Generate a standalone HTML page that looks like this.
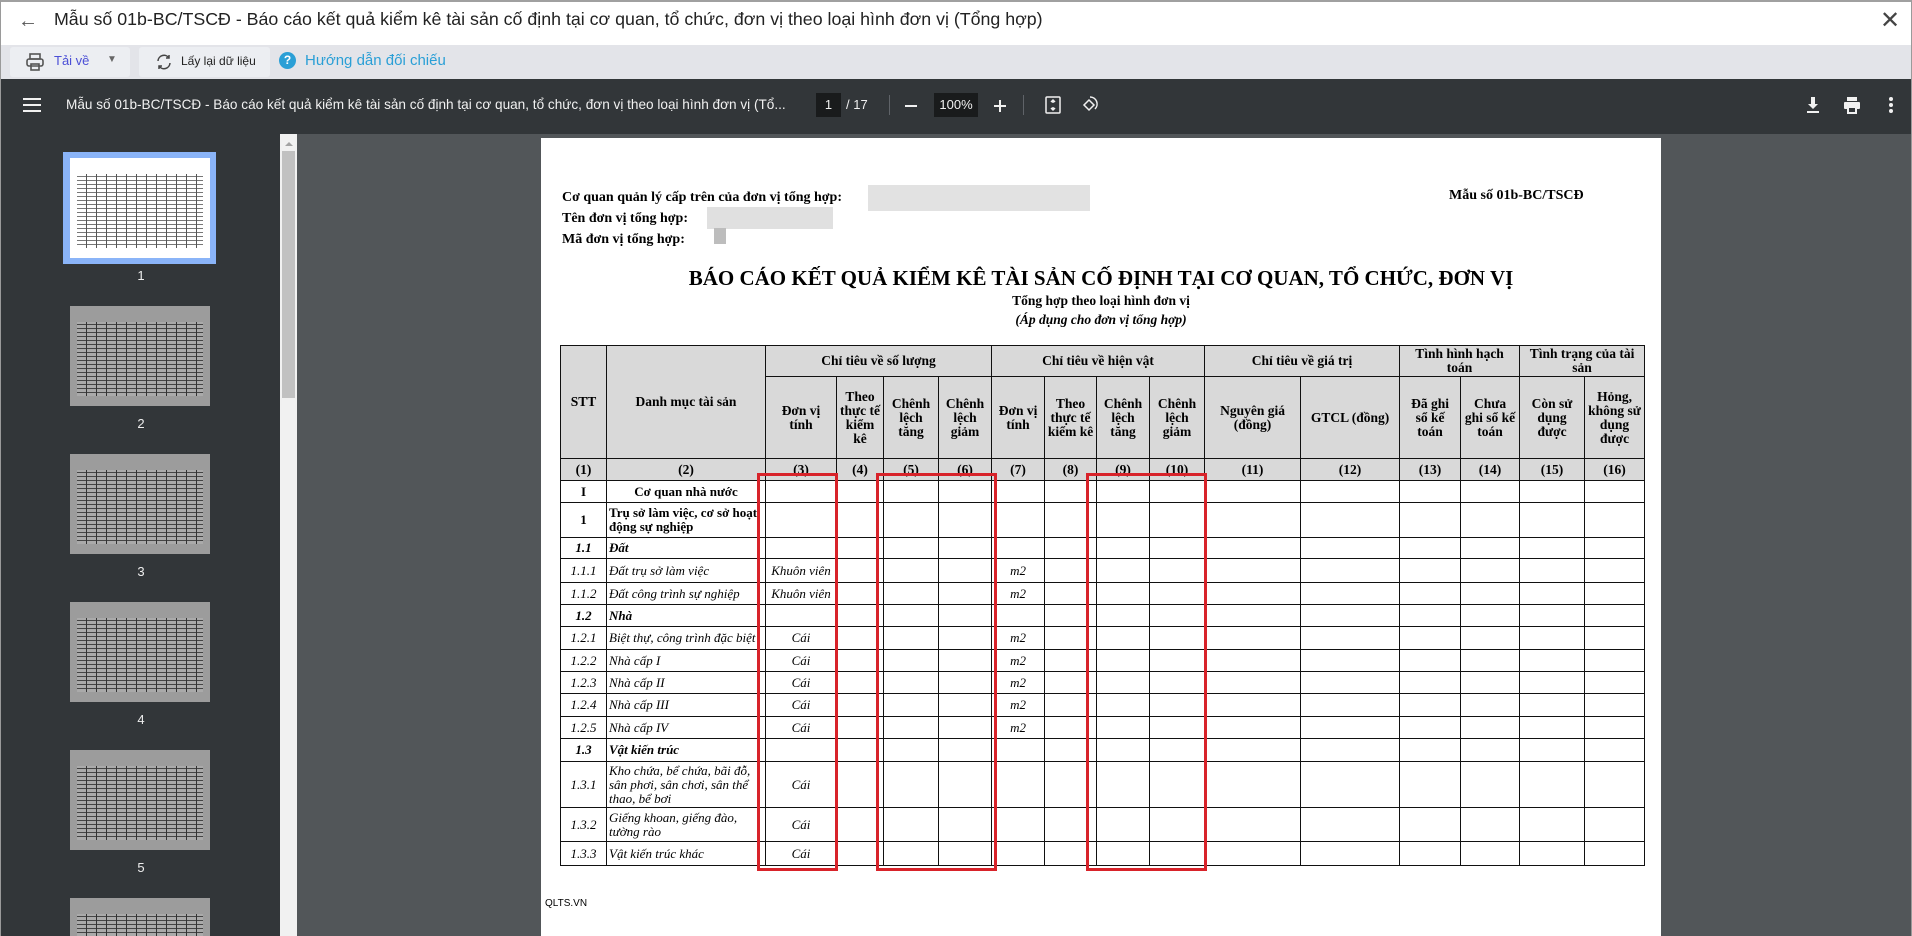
<!DOCTYPE html>
<html style="overflow:hidden;height:936px"><head><meta charset="utf-8"><style>
*{margin:0;padding:0;box-sizing:border-box}
body{width:1912px;height:936px;overflow:hidden;background:#fff;font-family:"Liberation Sans",sans-serif;position:relative}
.abs{position:absolute}
#frame{left:0;top:0;width:1912px;height:936px;border:1px solid #9a9a9a;border-top:2px solid #a0a0a0}
#title{left:54px;top:9px;font-size:17.8px;color:#222;white-space:nowrap}
#tb{left:1px;top:45px;width:1910px;height:34px;background:#e3e4e9}
#dark{left:1px;top:79px;width:1910px;height:55px;background:#323639;color:#f1f1f1}
#side{left:1px;top:134px;width:279px;height:802px;background:#323639;overflow:hidden}
#main{left:297px;top:134px;width:1614px;height:802px;background:#525659}
#page{left:541px;top:138px;width:1120px;height:798px;background:#fff;overflow:hidden}
.ser{font-family:"Liberation Serif",serif}
table{border-collapse:collapse;table-layout:fixed;font-family:"Liberation Serif",serif;font-size:13px;color:#000}
td{border:1px solid #111;text-align:center;vertical-align:middle;line-height:14px;padding:0 2px;overflow:hidden}
thead td{background:#d9d9d9;font-weight:bold;font-size:13.5px}
thead tr.h2 td{padding:0 5px}
.l{text-align:left}
.b{font-weight:bold}.i{font-style:italic}
.red{position:absolute;border:3px solid #d8232a}
.th{position:absolute;left:69px;width:140px;height:100px;background:#9c9c9c;
background-image:repeating-linear-gradient(90deg,transparent 0 9px,#333 9px 10px),repeating-linear-gradient(0deg,#aaa 0 3px,#444 3px 4px);background-size:126px 74px;background-position:7px 16px;background-repeat:no-repeat}
.lbl{position:absolute;left:0;width:280px;text-align:center;color:#eee;font-size:13px}
</style></head><body>
<div id="frame" class="abs"></div>
<div class="abs" style="left:18px;top:10px;font-size:20px;color:#555">←</div>
<div id="title" class="abs">Mẫu số 01b-BC/TSCĐ - Báo cáo kết quả kiểm kê tài sản cố định tại cơ quan, tổ chức, đơn vị theo loại hình đơn vị (Tổng hợp)</div>
<div class="abs" style="left:1880px;top:6px;font-size:24px;color:#444">✕</div>

<div id="tb" class="abs">
 <div class="abs" style="left:9px;top:2px;width:120px;height:30px;background:#eceef2;border-radius:3px"></div>
 <div class="abs" style="left:138px;top:2px;width:131px;height:30px;background:#eceef2;border-radius:3px"></div>
 <svg class="abs" style="left:24px;top:7px" width="20" height="20" viewBox="0 0 20 20" fill="none" stroke="#555" stroke-width="1.6"><rect x="5" y="2" width="10" height="5"/><rect x="2" y="7" width="16" height="7" rx="2"/><rect x="6" y="12" width="8" height="6"/></svg>
 <div class="abs" style="left:53px;top:8px;font-size:13px;color:#4b4fd6">Tải về</div>
 <div class="abs" style="left:106px;top:9px;font-size:10px;color:#666">▼</div>
 <svg class="abs" style="left:154px;top:8px" width="18" height="18" viewBox="0 0 18 18" fill="none" stroke="#444" stroke-width="1.5"><path d="M3 8a6 6 0 0 1 11-3M15 10a6 6 0 0 1-11 3"/><path d="M14 2v3h-3M4 16v-3h3"/></svg>
 <div class="abs" style="left:180px;top:9px;font-size:12px;color:#222">Lấy lại dữ liệu</div>
 <div class="abs" style="left:278px;top:7px;width:17px;height:17px;border-radius:50%;background:#2a9fd6;color:#fff;font-size:12px;font-weight:bold;text-align:center;line-height:17px">?</div>
 <div class="abs" style="left:304px;top:7px;font-size:15px;color:#2a9fd6">Hướng dẫn đối chiếu</div>
</div>

<div id="dark" class="abs">
 <div class="abs" style="left:22px;top:19px;width:18px;height:2px;background:#f1f1f1;box-shadow:0 6px 0 #f1f1f1,0 12px 0 #f1f1f1"></div>
 <div class="abs" style="left:65px;top:18px;font-size:13.6px;white-space:nowrap">Mẫu số 01b-BC/TSCĐ - Báo cáo kết quả kiểm kê tài sản cố định tại cơ quan, tổ chức, đơn vị theo loại hình đơn vị (Tổ...</div>
 <div class="abs" style="left:815px;top:14px;width:25px;height:24px;background:#191b1c;font-size:13px;text-align:center;line-height:24px">1</div>
 <div class="abs" style="left:845px;top:18px;font-size:13px">/ 17</div>
 <div class="abs" style="left:888px;top:16px;width:1px;height:20px;background:#5f6368"></div>
 <div class="abs" style="left:904px;top:26px;width:12px;height:2px;background:#f1f1f1"></div>
 <div class="abs" style="left:933px;top:14px;width:44px;height:24px;background:#191b1c;font-size:13px;text-align:center;line-height:24px">100%</div>
 <div class="abs" style="left:993px;top:26px;width:12px;height:2px;background:#f1f1f1"></div>
 <div class="abs" style="left:998px;top:21px;width:2px;height:12px;background:#f1f1f1"></div>
 <div class="abs" style="left:1022px;top:16px;width:1px;height:20px;background:#5f6368"></div>
 <svg class="abs" style="left:1043px;top:17px" width="18" height="18" viewBox="0 0 18 18" fill="none" stroke="#f1f1f1" stroke-width="1.5"><rect x="2" y="1" width="14" height="16" rx="1"/><path d="M9 4v3M9 11v3M7 6l2-2 2 2M7 12l2 2 2-2"/></svg>
 <svg class="abs" style="left:1080px;top:16px" width="18" height="20" viewBox="0 0 18 20" fill="none" stroke="#f1f1f1" stroke-width="1.5"><path d="M8 5l-5 5 5 5 5-5z"/><path d="M9 2a7 7 0 0 1 5 12"/></svg>
 <svg class="abs" style="left:1804px;top:17px" width="16" height="18" viewBox="0 0 16 18" fill="#f1f1f1"><path d="M6 1h4v7h3l-5 5-5-5h3z"/><rect x="2" y="15" width="12" height="2"/></svg>
 <svg class="abs" style="left:1842px;top:17px" width="18" height="18" viewBox="0 0 18 18" fill="#f1f1f1"><rect x="4" y="1" width="10" height="4"/><rect x="1" y="6" width="16" height="7" rx="1"/><rect x="5" y="11" width="8" height="6" fill="#323639" stroke="#f1f1f1" stroke-width="2"/></svg>
 <div class="abs" style="left:1888px;top:18px;width:4px;height:4px;border-radius:50%;background:#f1f1f1;box-shadow:0 6px 0 #f1f1f1,0 12px 0 #f1f1f1"></div>
</div>

<div id="side" class="abs">
 <div class="abs" style="left:62px;top:18px;width:153px;height:112px;background:#8ab4f8"></div>
 <div class="th" style="top:24px;background-color:#fff;background-image:repeating-linear-gradient(90deg,transparent 0 9px,#555 9px 10px),repeating-linear-gradient(0deg,#fff 0 3px,#777 3px 4px)"></div>
 <div class="lbl" style="top:134px">1</div>
 <div class="th" style="top:172px"></div><div class="lbl" style="top:282px">2</div>
 <div class="th" style="top:320px"></div><div class="lbl" style="top:430px">3</div>
 <div class="th" style="top:468px"></div><div class="lbl" style="top:578px">4</div>
 <div class="th" style="top:616px"></div><div class="lbl" style="top:726px">5</div>
 <div class="th" style="top:764px;height:38px"></div>
</div>
<div class="abs" style="left:280px;top:134px;width:17px;height:802px;background:#f1f1f1"></div>
<div class="abs" style="left:282px;top:151px;width:13px;height:247px;background:#c1c1c1"></div>
<div class="abs" style="width:0;height:0;border:4px solid transparent;border-bottom-color:#a3a3a3;left:285px;top:138px"></div>
<div id="main" class="abs"></div>

<div id="page" class="abs ser">
 <div class="abs b" style="left:21px;top:49px;font-size:14px;line-height:21px">Cơ quan quản lý cấp trên của đơn vị tổng hợp:<br>Tên đơn vị tổng hợp:<span style="display:inline-block;width:126px"></span>g<br>Mã đơn vị tổng hợp:</div>
 <div class="abs" style="left:327px;top:47px;width:222px;height:26px;background:#e2e2e2"></div>
 <div class="abs" style="left:166px;top:69px;width:126px;height:22px;background:#e0e0e0"></div>
 <div class="abs" style="left:173px;top:90px;width:12px;height:16px;background:#bdbdbd"></div>
 <div class="abs b" style="left:908px;top:50px;font-size:14px">Mẫu số 01b-BC/TSCĐ</div>
 <div class="abs b" style="left:0;width:1120px;top:128px;text-align:center;font-size:21px">BÁO CÁO KẾT QUẢ KIỂM KÊ TÀI SẢN CỐ ĐỊNH TẠI CƠ QUAN, TỔ CHỨC, ĐƠN VỊ</div>
 <div class="abs b" style="left:0;width:1120px;top:155px;text-align:center;font-size:13.5px">Tổng hợp theo loại hình đơn vị</div>
 <div class="abs b i" style="left:0;width:1120px;top:174px;text-align:center;font-size:13.5px">(Áp dụng cho đơn vị tổng hợp)</div>
 <div class="abs" style="left:4px;top:760px;font-size:10px;font-family:'Liberation Sans',sans-serif">QLTS.VN</div>
</div>

<table class="abs" style="left:560px;top:345px;width:1085px">
<colgroup><col style="width:46px"><col style="width:159px"><col style="width:71px"><col style="width:47px"><col style="width:55px"><col style="width:53px"><col style="width:53px"><col style="width:52px"><col style="width:53px"><col style="width:55px"><col style="width:96px"><col style="width:99px"><col style="width:61px"><col style="width:59px"><col style="width:65px"><col style="width:60px"></colgroup>
<thead>
<tr style="height:31px"><td rowspan="2">STT</td><td rowspan="2">Danh mục tài sản</td><td colspan="4">Chỉ tiêu về số lượng</td><td colspan="4">Chỉ tiêu về hiện vật</td><td colspan="2">Chỉ tiêu về giá trị</td><td colspan="2" style="padding:0 12px">Tình hình hạch toán</td><td colspan="2">Tình trạng của tài sản</td></tr>
<tr style="height:82px" class="h2"><td style="padding:0 12px">Đơn vị tính</td><td style="padding:0 2px">Theo thực tế kiểm kê</td><td>Chênh lệch tăng</td><td>Chênh lệch giảm</td><td>Đơn vị tính</td><td style="padding:0 2px">Theo thực tế kiểm kê</td><td>Chênh lệch tăng</td><td>Chênh lệch giảm</td><td style="padding:0 12px">Nguyên giá (đồng)</td><td>GTCL (đồng)</td><td style="padding:0 8px">Đã ghi sổ kế toán</td><td style="padding:0 3px">Chưa ghi sổ kế toán</td><td style="padding:0 10px">Còn sử dụng được</td><td style="padding:0 3px">Hỏng, không sử dụng được</td></tr>
<tr style="height:22px"><td>(1)</td><td>(2)</td><td>(3)</td><td>(4)</td><td>(5)</td><td>(6)</td><td>(7)</td><td>(8)</td><td>(9)</td><td>(10)</td><td>(11)</td><td>(12)</td><td>(13)</td><td>(14)</td><td>(15)</td><td>(16)</td></tr>
</thead>
<tbody>
<tr style="height:22px" class="b"><td>I</td><td>Cơ quan nhà nước</td><td></td><td></td><td></td><td></td><td></td><td></td><td></td><td></td><td></td><td></td><td></td><td></td><td></td><td></td></tr>
<tr style="height:35px" class="b"><td>1</td><td class="l">Trụ sở làm việc, cơ sở hoạt động sự nghiệp</td><td></td><td></td><td></td><td></td><td></td><td></td><td></td><td></td><td></td><td></td><td></td><td></td><td></td><td></td></tr>
<tr style="height:21px" class="b i"><td>1.1</td><td class="l">Đất</td><td></td><td></td><td></td><td></td><td></td><td></td><td></td><td></td><td></td><td></td><td></td><td></td><td></td><td></td></tr>
<tr style="height:24px" class="i"><td>1.1.1</td><td class="l">Đất trụ sở làm việc</td><td>Khuôn viên</td><td></td><td></td><td></td><td>m2</td><td></td><td></td><td></td><td></td><td></td><td></td><td></td><td></td><td></td></tr>
<tr style="height:22px" class="i"><td>1.1.2</td><td class="l">Đất công trình sự nghiệp</td><td>Khuôn viên</td><td></td><td></td><td></td><td>m2</td><td></td><td></td><td></td><td></td><td></td><td></td><td></td><td></td><td></td></tr>
<tr style="height:22px" class="b i"><td>1.2</td><td class="l">Nhà</td><td></td><td></td><td></td><td></td><td></td><td></td><td></td><td></td><td></td><td></td><td></td><td></td><td></td><td></td></tr>
<tr style="height:23px" class="i"><td>1.2.1</td><td class="l">Biệt thự, công trình đặc biệt</td><td>Cái</td><td></td><td></td><td></td><td>m2</td><td></td><td></td><td></td><td></td><td></td><td></td><td></td><td></td><td></td></tr>
<tr style="height:22px" class="i"><td>1.2.2</td><td class="l">Nhà cấp I</td><td>Cái</td><td></td><td></td><td></td><td>m2</td><td></td><td></td><td></td><td></td><td></td><td></td><td></td><td></td><td></td></tr>
<tr style="height:22px" class="i"><td>1.2.3</td><td class="l">Nhà cấp II</td><td>Cái</td><td></td><td></td><td></td><td>m2</td><td></td><td></td><td></td><td></td><td></td><td></td><td></td><td></td><td></td></tr>
<tr style="height:23px" class="i"><td>1.2.4</td><td class="l">Nhà cấp III</td><td>Cái</td><td></td><td></td><td></td><td>m2</td><td></td><td></td><td></td><td></td><td></td><td></td><td></td><td></td><td></td></tr>
<tr style="height:22px" class="i"><td>1.2.5</td><td class="l">Nhà cấp IV</td><td>Cái</td><td></td><td></td><td></td><td>m2</td><td></td><td></td><td></td><td></td><td></td><td></td><td></td><td></td><td></td></tr>
<tr style="height:23px" class="b i"><td>1.3</td><td class="l">Vật kiến trúc</td><td></td><td></td><td></td><td></td><td></td><td></td><td></td><td></td><td></td><td></td><td></td><td></td><td></td><td></td></tr>
<tr style="height:46px" class="i"><td>1.3.1</td><td class="l">Kho chứa, bể chứa, bãi đỗ, sân phơi, sân chơi, sân thể thao, bể bơi</td><td>Cái</td><td></td><td></td><td></td><td></td><td></td><td></td><td></td><td></td><td></td><td></td><td></td><td></td><td></td></tr>
<tr style="height:34px" class="i"><td>1.3.2</td><td class="l">Giếng khoan, giếng đào, tường rào</td><td>Cái</td><td></td><td></td><td></td><td></td><td></td><td></td><td></td><td></td><td></td><td></td><td></td><td></td><td></td></tr>
<tr style="height:24px" class="i"><td>1.3.3</td><td class="l">Vật kiến trúc khác</td><td>Cái</td><td></td><td></td><td></td><td></td><td></td><td></td><td></td><td></td><td></td><td></td><td></td><td></td><td></td></tr>
</tbody></table>

<div class="red" style="left:757px;top:473px;width:81px;height:398px"></div>
<div class="red" style="left:876px;top:473px;width:121px;height:398px"></div>
<div class="red" style="left:1086px;top:473px;width:121px;height:398px"></div>
</body></html>
